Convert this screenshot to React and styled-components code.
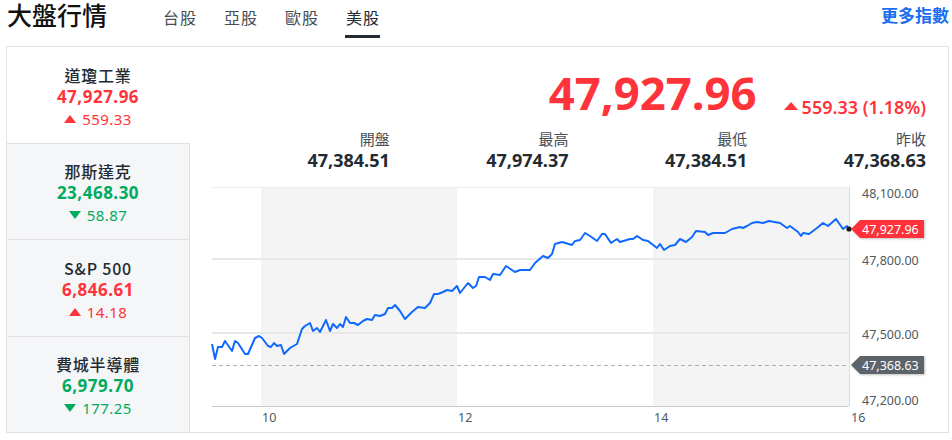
import React from "react";
import styled, { createGlobalStyle } from "styled-components";

const RED = "#ff333a";
const GREEN = "#00ab5e";
const FONT = `"Noto Sans", "Noto Sans CJK TC", sans-serif`;

const GlobalStyle = createGlobalStyle`
	body {
		margin: 0;
		background: #fff;
		font-family: ${FONT};
		color: #232a31;
	}
`;

// Data
const indices = [
	{ name: "道瓊工業", value: "47,927.96", change: "559.33", up: true, active: true },
	{ name: "那斯達克", value: "23,468.30", change: "58.87", up: false },
	{ name: "S&P 500", value: "6,846.61", change: "14.18", up: true },
	{ name: "費城半導體", value: "6,979.70", change: "177.25", up: false },
];

const tabs = ["台股", "亞股", "歐股", "美股"];

const stats = [
	{ label: "開盤", value: "47,384.51" },
	{ label: "最高", value: "47,974.37" },
	{ label: "最低", value: "47,384.51" },
	{ label: "昨收", value: "47,368.63" },
];

const points = [[212,343],[215,358],[218,346],[222,346],[225,340],[232,350],[235,340],[238,342],[245,353],[248,353],[255,337],[259,335],[262,337],[268,345],[271,346],[274,342],[277,345],[281,344],[284,353],[290,347],[297,343],[302,328],[305,325],[310,322],[313,330],[317,327],[320,331],[326,319],[330,330],[333,323],[337,327],[340,323],[343,326],[346,316],[350,322],[354,322],[358,324],[363,320],[367,318],[372,319],[375,314],[380,315],[385,313],[388,307],[392,307],[395,304],[400,310],[405,318],[412,311],[418,306],[425,307],[430,302],[434,293],[438,293],[443,291],[447,289],[452,290],[457,285],[460,292],[468,282],[473,287],[476,285],[479,276],[485,276],[490,279],[493,273],[500,274],[506,265],[515,271],[520,269],[530,269],[535,262],[543,255],[548,257],[552,253],[555,243],[562,241],[572,244],[575,240],[580,239],[585,232],[590,235],[597,240],[602,233],[605,233],[611,242],[617,238],[620,241],[630,238],[633,238],[637,235],[643,239],[648,240],[657,247],[660,243],[664,249],[670,245],[675,244],[680,238],[686,241],[692,236],[696,230],[705,231],[708,234],[713,232],[725,232],[732,228],[740,226],[743,227],[747,225],[752,222],[757,221],[763,222],[769,220],[780,222],[787,227],[790,225],[798,231],[801,235],[803,232],[809,233],[817,227],[823,222],[828,225],[836,218],[843,228],[847,225],[849,228]];

const linePath = points.map((p, i) => `${i ? "L" : "M"}${p[0]} ${p[1]}`).join(" ");

export default function App() {
	return (
		<>
			<GlobalStyle />
			<Page>
				<Header>
					<Title>大盤行情</Title>
					<Tabs>
						{tabs.map((t) => (
							<Tab key={t} $active={t === "美股"}>
								{t}
							</Tab>
						))}
					</Tabs>
					<MoreLink>更多指數</MoreLink>
				</Header>
				<Panel>
					<Sidebar>
						{indices.map((item) => (
							<IndexItem key={item.name} $active={item.active}>
								<IndexName>{item.name}</IndexName>
								<IndexValue $up={item.up}>{item.value}</IndexValue>
								<IndexChange $up={item.up}>
									<Triangle $up={item.up} $size={6.5} />
									{item.change}
								</IndexChange>
							</IndexItem>
						))}
					</Sidebar>
					<Detail>
						<PriceRow>
							<BigPrice>47,927.96</BigPrice>
							<BigChange>
								<Triangle $up $size={7} />
								559.33 (1.18%)
							</BigChange>
						</PriceRow>
						<StatsGrid>
							{stats.map((s) => (
								<Stat key={s.label}>
									<StatLabel>{s.label}</StatLabel>
									<StatValue>{s.value}</StatValue>
								</Stat>
							))}
						</StatsGrid>
						<Chart />
					</Detail>
				</Panel>
			</Page>
		</>
	);
}

const Chart = () => {
	const yLabels = [
		{ t: "48,100.00", y: 192 },
		{ t: "47,800.00", y: 259 },
		{ t: "47,500.00", y: 333 },
		{ t: "47,200.00", y: 399 },
	];
	const xLabels = [
		{ t: "10", x: 262 },
		{ t: "12", x: 458 },
		{ t: "14", x: 654 },
		{ t: "16", x: 851 },
	];
	return (
		<ChartSvg viewBox="190 178 758 254" width="758" height="254">
			<defs>
				<filter id="tagShadow" x="-10%" y="-30%" width="130%" height="170%">
					<feDropShadow dx="1" dy="1" stdDeviation="1" floodOpacity="0.25" />
				</filter>
			</defs>
			<rect x="261" y="186" width="196" height="219" fill="#f4f4f4" />
			<rect x="653" y="186" width="196" height="219" fill="#f4f4f4" />
			<line x1="212" y1="186.5" x2="849" y2="186.5" stroke="#eeeeee" />
			<line x1="212" y1="258" x2="849" y2="258" stroke="#e8e8e8" strokeWidth="2" />
			<line x1="212" y1="332" x2="849" y2="332" stroke="#e8e8e8" strokeWidth="2" />
			<line x1="849.5" y1="186" x2="849.5" y2="405" stroke="#dcdcdc" />
			<line x1="212" y1="405.5" x2="849" y2="405.5" stroke="#c8c9d2" />
			<line x1="212" y1="364.5" x2="849" y2="364.5" stroke="#b0b0b0" strokeDasharray="4 3" />
			<path d={linePath} fill="none" stroke="#0f69ff" strokeWidth="2" strokeLinejoin="round" />
			<circle cx="849" cy="228" r="2.6" fill="#1b1b1b" />
			{yLabels.map((l) => (
				<AxisText key={l.t} x="862" y={l.y + 4.5}>
					{l.t}
				</AxisText>
			))}
			{xLabels.map((l) => (
				<AxisText key={l.t} x={l.x} y={420.5}>
					{l.t}
				</AxisText>
			))}
			<g filter="url(#tagShadow)">
				<path d="M851 228 L860 219 H924 V237 H860 Z" fill={RED} />
				<path d="M851 364 L860 355 H924 V373 H860 Z" fill="#5b636a" />
			</g>
			<TagText x="862" y="232.5">47,927.96</TagText>
			<TagText x="862" y="368.5">47,368.63</TagText>
		</ChartSvg>
	);
};

const Page = styled.div`
	width: 952px;
	padding: 0 3px 0 6px;
	box-sizing: border-box;
`;

const Header = styled.div`
	height: 46px;
	display: flex;
	align-items: flex-start;
	padding-left: 1px;
`;

const Title = styled.h1`
	margin: -1px 0 0;
	font-size: 25px;
	line-height: 32px;
	font-weight: 500;
	color: #111;
	white-space: nowrap;
`;

const Tabs = styled.div`
	display: flex;
	gap: 26px;
	margin-left: 55px;
`;

const Tab = styled.div`
	width: 35px;
	margin-top: 7px;
	padding-bottom: 6px;
	font-size: 16px;
	line-height: 22px;
	letter-spacing: 1px;
	text-indent: 1px;
	color: ${(p) => (p.$active ? "#232a31" : "#464e56")};
	border-bottom: 3px solid ${(p) => (p.$active ? "#232a31" : "transparent")};
	white-space: nowrap;
`;

const MoreLink = styled.a`
	margin-left: auto;
	margin-top: 5px;
	font-size: 17px;
	line-height: 22px;
	font-weight: 700;
	color: #1d6df0;
	cursor: pointer;
`;

const Panel = styled.div`
	display: flex;
	height: 387px;
	box-sizing: border-box;
	border: 1px solid #e2e2e2;
`;

const Sidebar = styled.div`
	width: 183px;
	display: flex;
	flex-direction: column;
	flex-shrink: 0;
`;

const IndexItem = styled.div`
	flex: 1;
	display: flex;
	flex-direction: column;
	align-items: center;
	justify-content: center;
	padding-top: 4px;
	box-sizing: border-box;
	background: ${(p) => (p.$active ? "#fff" : "#f5f6f8")};
	border-right: 1px solid ${(p) => (p.$active ? "transparent" : "#e0e0e3")};
	& + & {
		border-top: 1px solid #e0e0e3;
	}
`;

const IndexName = styled.div`
	font-family: "Noto Sans CJK TC", "Noto Sans", sans-serif;
	font-size: 16px;
	line-height: 22px;
	letter-spacing: 0.8px;
	font-weight: 500;
	color: #232a31;
`;

const IndexValue = styled.div`
	font-size: 17px;
	line-height: 22px;
	letter-spacing: 0.5px;
	font-weight: 700;
	color: ${(p) => (p.$up ? RED : GREEN)};
`;

const IndexChange = styled.div`
	display: flex;
	align-items: center;
	gap: 6px;
	font-size: 15px;
	line-height: 22px;
	letter-spacing: 0.4px;
	color: ${(p) => (p.$up ? RED : GREEN)};
`;

const Triangle = styled.span`
	width: 0;
	height: 0;
	border-left: ${(p) => p.$size || 6}px solid transparent;
	border-right: ${(p) => p.$size || 6}px solid transparent;
	${(p) =>
		p.$up
			? `border-bottom: ${(p.$size || 6) * 1.25}px solid ${RED};`
			: `border-top: ${(p.$size || 6) * 1.25}px solid ${GREEN};`}
`;

const Detail = styled.div`
	flex: 1;
	display: flex;
	flex-direction: column;
	min-width: 0;
`;

const PriceRow = styled.div`
	display: flex;
	justify-content: flex-end;
	align-items: baseline;
	gap: 27px;
	padding: 22px 22px 0 0;
`;

const BigPrice = styled.div`
	font-size: 45.5px;
	line-height: 46px;
	font-weight: 700;
	color: ${RED};
`;

const BigChange = styled.div`
	display: flex;
	align-items: center;
	gap: 4px;
	font-size: 18px;
	line-height: 18px;
	font-weight: 600;
	color: ${RED};
	span {
		margin-bottom: 2px;
	}
`;

const StatsGrid = styled.div`
	display: grid;
	grid-template-columns: repeat(4, 1fr);
	padding: 0 22px 0 21px;
	margin-top: 13px;
`;

const Stat = styled.div`
	text-align: right;
`;

const StatLabel = styled.div`
	font-size: 15px;
	line-height: 20px;
	color: #464e56;
`;

const StatValue = styled.div`
	font-size: 18px;
	line-height: 22px;
	font-weight: 700;
	color: #232a31;
`;

const ChartSvg = styled.svg`
	display: block;
	margin-top: 8px;
	flex-shrink: 0;
`;

const AxisText = styled.text`
	font-family: ${FONT};
	font-size: 12.5px;
	fill: #505860;
`;

const TagText = styled.text`
	font-family: ${FONT};
	font-size: 12.5px;
	fill: #fff;
`;
